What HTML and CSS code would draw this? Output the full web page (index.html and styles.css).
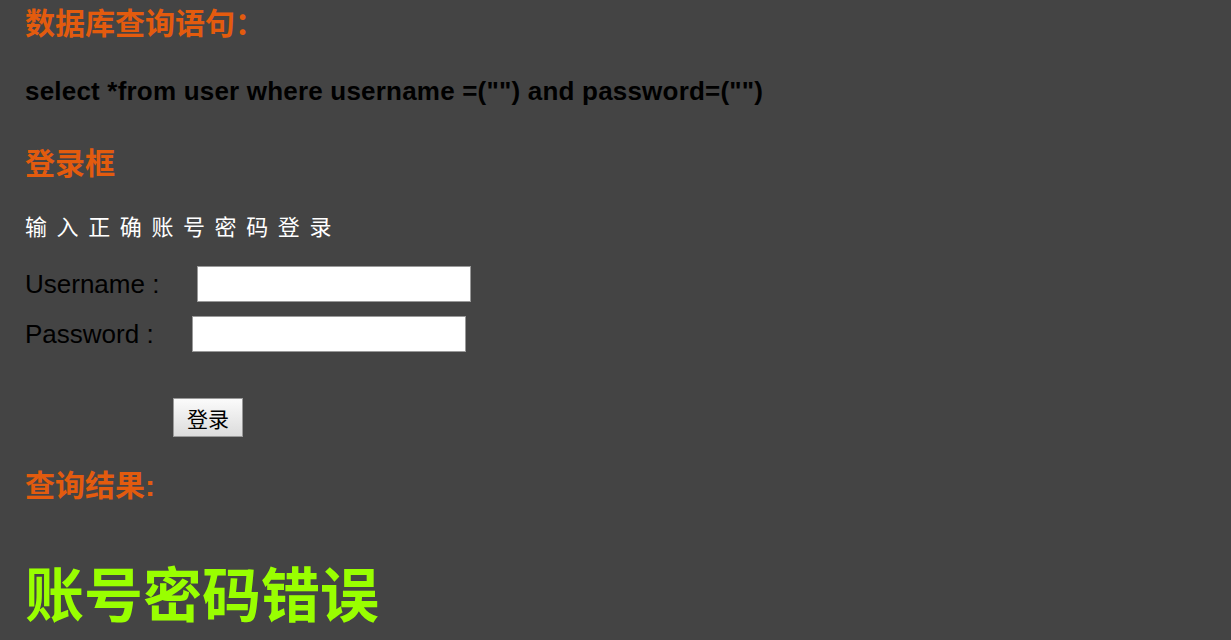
FILE: index.html
```html
<!DOCTYPE html>
<html lang="zh">
<head>
<meta charset="utf-8">
<title>登录</title>
<link rel="stylesheet" href="styles.css">
</head>
<body>
<div class="page">
  <h2 class="title title-first">数据库查询语句：</h2>
  <p class="sql">select *from user where username =("") and password=("")</p>
  <h2 class="title title-login">登录框</h2>
  <p class="hint">输入正确账号密码登录</p>
  <form class="login" onsubmit="return false">
    <div class="row row-user">
      <label class="label">Username :</label>
      <input class="field" type="text" name="username">
    </div>
    <div class="row row-pass">
      <label class="label">Password :</label>
      <input class="field" type="password" name="password">
    </div>
    <div class="actions">
      <button class="submit" type="submit">登录</button>
    </div>
  </form>
  <h2 class="title title-result">查询结果:</h2>
  <p class="result">账号密码错误</p>
</div>
</body>
</html>
```
FILE: styles.css
```css
html, body {
  margin: 0;
  padding: 0;
  background: #444444;
}
body {
  font-family: "Liberation Sans", "Noto Sans CJK SC", sans-serif;
  color: #000;
}
.page {
  padding: 4px 0 0 25px;
}
.title {
  margin: 0;
  font-size: 30px;
  line-height: 40px;
  font-weight: bold;
  color: #e35b0e;
}
.title-login {
  margin-top: 37px;
}
.title-result {
  margin-top: 29px;
}
.sql {
  margin: 31px 0 0;
  font-size: 26px;
  line-height: 32px;
  letter-spacing: 0.2px;
  font-weight: bold;
}
.hint {
  margin: 29px 0 0;
  font-size: 22px;
  line-height: 30px;
  letter-spacing: 9.6px;
  color: #fff;
}
.login {
  margin: 23px 0 0;
}
.row {
  display: flex;
  align-items: center;
  height: 36px;
}
.row-pass {
  margin-top: 14px;
}
.label {
  font-size: 26px;
}
.field {
  box-sizing: border-box;
  width: 274px;
  height: 36px;
  margin: 0 0 0 38px;
  padding: 0 4px;
  border: 1px solid #999;
  background: #fff;
  font-size: 18px;
}
.actions {
  margin-top: 46px;
  padding-left: 148px;
}
.submit {
  box-sizing: border-box;
  width: 70px;
  height: 39px;
  padding: 0;
  border: 1px solid #999;
  border-radius: 0;
  background: linear-gradient(#fbfbfb, #dcdcdc);
  font-family: "Noto Sans CJK SC", sans-serif;
  font-size: 21px;
  color: #000;
}
.result {
  margin: 56px 0 0;
  font-size: 59px;
  line-height: 70px;
  font-weight: bold;
  color: #99ff00;
}
```
